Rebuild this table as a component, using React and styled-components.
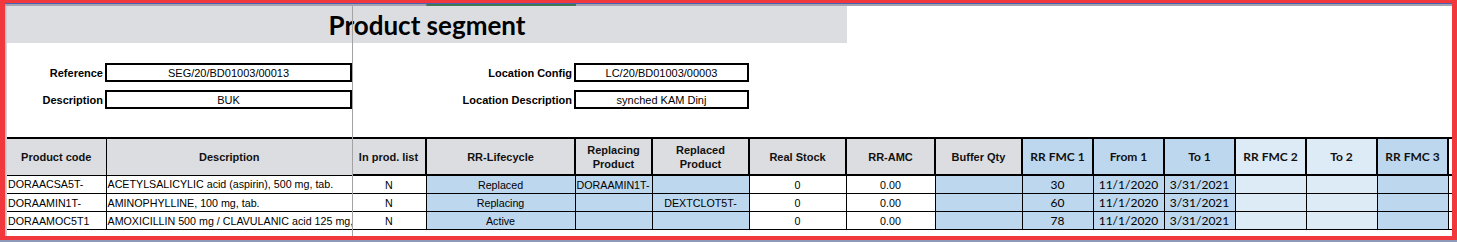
import React from 'react';
import styled, { createGlobalStyle } from 'styled-components';

const GlobalStyle = createGlobalStyle`
  html, body {
    margin: 0;
    padding: 0;
    background: #fff;
  }
  body {
    width: 1457px;
    height: 242px;
    overflow: hidden;
    font-family: "Liberation Sans", Arial, sans-serif;
  }
`;

const Frame = styled.div`
  box-sizing: border-box;
  width: 1457px;
  height: 240px;
  border: solid #f0383d;
  border-width: 3px 5px 4px 5px;
  background: #fff;
  display: flex;
  flex-direction: column;
  overflow: hidden;
`;

const BelowFrame = styled.div`
  height: 2px;
  background: #8e99b9;
`;

const ColumnStrip = styled.div`
  height: 2px;
  border-top: 1px solid #4b5fb3;
  background: #a4a4b0;
  display: flex;
  flex-shrink: 0;
`;

const StripSpacer = styled.div`
  width: ${p => p.$w}px;
  border-right: 1px solid #7c7c86;
`;

const SelectedColumn = styled.div`
  width: 149px;
  background: #3f7a57;
`;

const Body = styled.div`
  flex: 1;
  display: flex;
  min-height: 0;
`;

const RowStub = styled.div`
  width: 2px;
  background: linear-gradient(to right, #b9b9bd, #d6d6da);
  flex-shrink: 0;
`;

const Sheet = styled.div`
  position: relative;
  flex: 1;
  overflow: hidden;
`;

const FrozenLine = styled.div`
  position: absolute;
  top: 0;
  bottom: 0;
  left: 345px;
  width: 1px;
  background: #a3a3a3;
  z-index: 2;
`;

const TitleBand = styled.div`
  width: 840px;
  height: 37px;
  background: #dcdde1;
  display: flex;
  align-items: center;
  justify-content: center;
  font-family: Lato, "Open Sans", sans-serif;
  font-weight: 700;
  font-size: 26px;
  color: #000;
`;

const FormGrid = styled.div`
  display: grid;
  grid-template-columns: 98px 247px 222px 175px;
  grid-auto-rows: 19px;
  row-gap: 8px;
  padding-top: 20px;
`;

const Label = styled.div`
  display: flex;
  align-items: center;
  justify-content: flex-end;
  padding-right: 2px;
  font-weight: 700;
  font-size: 11px;
  color: #000;
`;

const ValueBox = styled.div`
  box-sizing: border-box;
  border: 2px solid #000;
  display: flex;
  align-items: center;
  justify-content: center;
  font-size: 11px;
  color: #000;
`;

const TableWrap = styled.div`
  margin-top: 28px;
  width: 1445px;
  overflow: hidden;
`;

const Table = styled.table`
  border-collapse: collapse;
  table-layout: fixed;
  width: 1512px;
  border-top: 2px solid #000;
`;

const HeadCell = styled.th`
  height: 35px;
  padding: 0 2px;
  background: ${p => p.$bg};
  border: ${p => (p.$thin ? '1px' : '2px')} solid #000;
  border-left-style: ${p => (p.$noLeft ? 'hidden' : 'solid')};
  border-right-style: ${p => (p.$noRight ? 'hidden' : 'solid')};
  font-family: ${p => (p.$calibri ? 'Lato, "Open Sans", sans-serif' : '"Liberation Sans", Arial, sans-serif')};
  font-size: ${p => (p.$calibri ? '12px' : '11px')};
  font-weight: 700;
  line-height: 14px;
  color: #111;
  text-align: center;
  vertical-align: middle;
`;

const Cell = styled.td`
  height: 17px;
  padding: 0 1px;
  background: ${p => p.$bg};
  border: 1px solid #000;
  border-left-style: ${p => (p.$noLeft ? 'hidden' : 'solid')};
  border-right-style: ${p => (p.$noRight ? 'hidden' : 'solid')};
  font-family: ${p => (p.$calibri ? 'Lato, "Open Sans", sans-serif' : '"Liberation Sans", Arial, sans-serif')};
  font-size: ${p => (p.$calibri ? '12px' : '10.7px')};
  color: #000;
  text-align: ${p => p.$align};
  white-space: nowrap;
  overflow: hidden;
  line-height: 16px;
`;

const GRAY = '#dcdde1';
const BLUE = '#bdd7ee';
const PALE = '#ddebf7';
const WHITE = '#ffffff';

const columns = [
  { key: 'code', title: 'Product code', w: 99, head: GRAY, bg: WHITE, align: 'left', thin: true, noLeft: true },
  { key: 'desc', title: 'Description', w: 246, head: GRAY, bg: WHITE, align: 'left', thin: true, noRight: true },
  { key: 'inList', title: 'In prod. list', w: 74, head: GRAY, bg: WHITE, align: 'center', noLeft: true },
  { key: 'life', title: 'RR-Lifecycle', w: 149, head: GRAY, bg: BLUE, align: 'center' },
  { key: 'replacing', title: ['Replacing', 'Product'], w: 77, head: GRAY, bg: BLUE, align: 'left' },
  { key: 'replaced', title: ['Replaced', 'Product'], w: 97, head: GRAY, bg: BLUE, align: 'center' },
  { key: 'stock', title: 'Real Stock', w: 97, head: GRAY, bg: WHITE, align: 'center' },
  { key: 'amc', title: 'RR-AMC', w: 89, head: GRAY, bg: WHITE, align: 'center' },
  { key: 'buffer', title: 'Buffer Qty', w: 87, head: GRAY, bg: BLUE, align: 'center' },
  { key: 'fmc1', title: 'RR FMC 1', w: 71, head: BLUE, bg: BLUE, align: 'center', calibri: true },
  { key: 'from1', title: 'From 1', w: 71, head: BLUE, bg: BLUE, align: 'center', calibri: true },
  { key: 'to1', title: 'To 1', w: 71, head: BLUE, bg: BLUE, align: 'center', calibri: true },
  { key: 'fmc2', title: 'RR FMC 2', w: 71, head: PALE, bg: PALE, align: 'center', calibri: true },
  { key: 'to2', title: 'To 2', w: 71, head: PALE, bg: PALE, align: 'center', calibri: true },
  { key: 'fmc3', title: 'RR FMC 3', w: 71, head: BLUE, bg: BLUE, align: 'center', calibri: true },
  { key: 'extra', title: '', w: 71, head: WHITE, bg: WHITE, align: 'center', calibri: true },
];

const rows = [
  {
    code: 'DORAACSA5T-', desc: 'ACETYLSALICYLIC acid (aspirin), 500 mg, tab.', inList: 'N',
    life: 'Replaced', replacing: 'DORAAMIN1T-', replaced: '', stock: '0', amc: '0.00',
    fmc1: '30', from1: '11/1/2020', to1: '3/31/2021',
  },
  {
    code: 'DORAAMIN1T-', desc: 'AMINOPHYLLINE, 100 mg, tab.', inList: 'N',
    life: 'Replacing', replacing: '', replaced: 'DEXTCLOT5T-', stock: '0', amc: '0.00',
    fmc1: '60', from1: '11/1/2020', to1: '3/31/2021',
  },
  {
    code: 'DORAAMOC5T1', desc: 'AMOXICILLIN 500 mg / CLAVULANIC acid 125 mg,', inList: 'N',
    life: 'Active', replacing: '', replaced: '', stock: '0', amc: '0.00',
    fmc1: '78', from1: '11/1/2020', to1: '3/31/2021',
  },
];

function HeaderTitle({ title }) {
  if (Array.isArray(title)) {
    return (
      <>
        {title[0]}
        <br />
        {title[1]}
      </>
    );
  }
  return title;
}

export default function App() {
  return (
    <>
      <GlobalStyle />
      <Frame>
        <ColumnStrip>
          <StripSpacer $w={421} />
          <SelectedColumn />
        </ColumnStrip>
        <Body>
          <RowStub />
          <Sheet>
            <FrozenLine />
            <TitleBand>Product segment</TitleBand>
            <FormGrid>
              <Label>Reference</Label>
              <ValueBox>SEG/20/BD01003/00013</ValueBox>
              <Label>Location Config</Label>
              <ValueBox>LC/20/BD01003/00003</ValueBox>
              <Label>Description</Label>
              <ValueBox>BUK</ValueBox>
              <Label>Location Description</Label>
              <ValueBox>synched KAM Dinj</ValueBox>
            </FormGrid>
            <TableWrap>
              <Table>
                <colgroup>
                  {columns.map(c => (
                    <col key={c.key} style={{ width: c.w }} />
                  ))}
                </colgroup>
                <thead>
                  <tr>
                    {columns.map(c => (
                      <HeadCell
                        key={c.key}
                        $bg={c.head}
                        $thin={c.thin}
                        $noLeft={c.noLeft}
                        $noRight={c.noRight}
                        $calibri={c.calibri}
                      >
                        <HeaderTitle title={c.title} />
                      </HeadCell>
                    ))}
                  </tr>
                </thead>
                <tbody>
                  {rows.map(r => (
                    <tr key={r.code}>
                      {columns.map(c => (
                        <Cell
                          key={c.key}
                          $bg={c.bg}
                          $align={c.align}
                          $noLeft={c.noLeft}
                          $noRight={c.noRight}
                          $calibri={c.calibri}
                        >
                          {r[c.key] || ''}
                        </Cell>
                      ))}
                    </tr>
                  ))}
                </tbody>
              </Table>
            </TableWrap>
          </Sheet>
        </Body>
      </Frame>
      <BelowFrame />
    </>
  );
}
